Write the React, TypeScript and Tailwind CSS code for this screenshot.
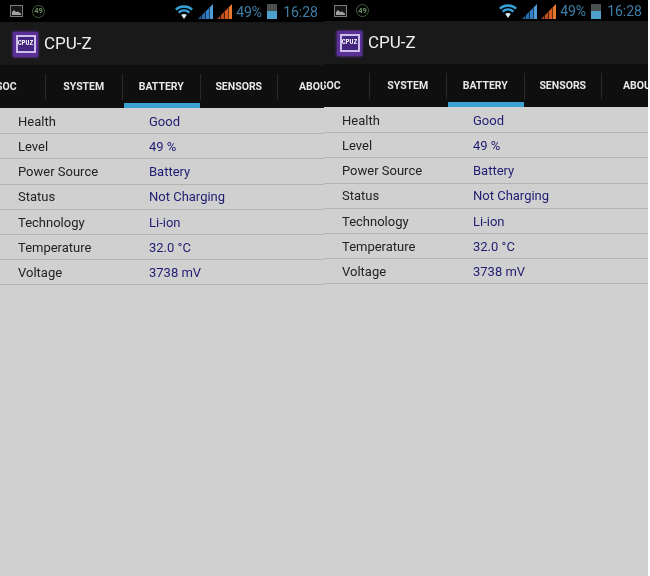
const rows = [
  ['Health', 'Good'],
  ['Level', '49 %'],
  ['Power Source', 'Battery'],
  ['Status', 'Not Charging'],
  ['Technology', 'Li-ion'],
  ['Temperature', '32.0 °C'],
  ['Voltage', '3738 mV'],
];

const tabs = ['SOC', 'SYSTEM', 'BATTERY', 'SENSORS', 'ABOUT'];

const PictureIcon = () => (
  <svg width="13" height="12" viewBox="0 0 13 12">
    <rect x="0.5" y="0.5" width="12" height="11" fill="#161616" stroke="#7c7c7c" />
    <path d="M2 10 L2 7 L4 5 L6 7 L8 6.5 L11 8.5 L11 10 Z" fill="#a0a0a0" />
  </svg>
);

const CircleBadge = () => (
  <div className="w-[13px] h-[13px] rounded-full border border-[#3f5f38] flex items-center justify-center text-[7.5px] font-bold text-[#6f8f68]">
    49
  </div>
);

const WifiIcon = () => (
  <svg width="18" height="14" viewBox="0 0 18 14" fill="none">
    <path d="M0.8 4.6 C5.4 0.4 12.6 0.4 17.2 4.6" stroke="#35a0d8" strokeWidth="2.4" />
    <path d="M3.6 7.6 C6.8 4.8 11.2 4.8 14.4 7.6" stroke="#35a0d8" strokeWidth="2.4" />
    <path d="M6.2 9.8 L9 14 L11.8 9.8 C10 8.8 8 8.8 6.2 9.8 Z" fill="#d8eef8" />
  </svg>
);

const SignalIcon = ({ color, top }: { color: string; top: string }) => (
  <svg width="15" height="15" viewBox="0 0 15 15">
    <path d="M0 15 L3.4 11.6 L3.4 15 Z" fill={color} opacity="0.75" />
    <path d="M4 11 L7.2 7.8 L7.2 15 L4 15 Z" fill={color} opacity="0.85" />
    <path d="M7.8 7.2 L11 4 L11 15 L7.8 15 Z" fill={color} />
    <path d="M11.6 3.4 L15 0 L15 15 L11.6 15 Z" fill={top} />
  </svg>
);

const BatteryIcon = () => (
  <div className="w-[10px] h-[15px] bg-[#4a4f52] flex flex-col justify-end">
    <div className="h-[8px] bg-[#4da0cc]" />
  </div>
);

const CpuzIcon = () => (
  <div className="w-[25px] h-[25px] bg-[#5a2f96] shadow-[0_0_3px_#6a3fb0] flex items-center justify-center">
    <div className="w-[20px] h-[18px] border-2 border-[#cdbdea] bg-[#43247e] flex items-center justify-center text-[6.5px] font-bold text-white leading-none [font-family:'Liberation_Mono',monospace]">
      CPUZ
    </div>
  </div>
);

const Panel = ({ top }: { top: string }) => (
  <div className="w-[324px] h-[576px] shrink-0 overflow-hidden flex flex-col bg-[#d0d0d0] [font-family:Roboto,sans-serif] blur-[0.4px]">
    <div className={`${top} shrink-0 bg-black flex items-center pl-[10px] pr-[6px]`}>
      <PictureIcon />
      <div className="ml-[9px]">
        <CircleBadge />
      </div>
      <div className="ml-auto flex items-center pt-[1px]">
        <WifiIcon />
        <div className="ml-[5px] flex items-center gap-[4px]">
          <SignalIcon color="#2f80c8" top="#4f9ad8" />
          <SignalIcon color="#d9591f" top="#e87a30" />
        </div>
        <span className="ml-[4px] text-[14px] leading-none text-[#3f7ea6]">49%</span>
        <div className="ml-[5px]">
          <BatteryIcon />
        </div>
        <span className="ml-[6px] text-[14px] leading-none text-[#3f7ea6]">16:28</span>
      </div>
    </div>
    <div className="h-[43px] shrink-0 bg-[#191919] flex items-center pl-[13px] pt-[1px]">
      <CpuzIcon />
      <span className="ml-[6px] text-[17px] text-[#f0f0f0]">CPU-Z</span>
    </div>
    <div className="h-[43px] shrink-0 bg-[#0f0f0f] flex -ml-[32px]">
      {tabs.map((t) => (
        <div key={t} className="w-[77.5px] shrink-0 flex flex-col">
          <div className="flex-1 flex items-center pt-[6px]">
            <span className="flex-1 text-center text-[10.5px] font-bold text-[#e8e8e8] whitespace-nowrap">{t}</span>
            <div className="w-px h-[26px] bg-[#2a2a2a]" />
          </div>
          <div className={t === 'BATTERY' ? 'h-[5px] mx-[1px] bg-[#3ca0d0]' : 'h-[5px]'} />
        </div>
      ))}
    </div>
    <div className="flex-1 flex flex-col pt-[1px]">
      {rows.map(([label, value]) => (
        <div key={label} className="h-[25.2px] shrink-0 flex items-center pl-[18px] pt-[1px] border-b border-[#b4b4b4] text-[13px]">
          <span className="w-[131px] text-[#222222]">{label}</span>
          <span className="text-[#201c72]">{value}</span>
        </div>
      ))}
    </div>
  </div>
);

export default function App() {
  return (
    <div className="w-[650px] h-[576px] bg-white flex overflow-hidden">
      <Panel top="h-[22px]" />
      <Panel top="h-[21px]" />
    </div>
  );
}
